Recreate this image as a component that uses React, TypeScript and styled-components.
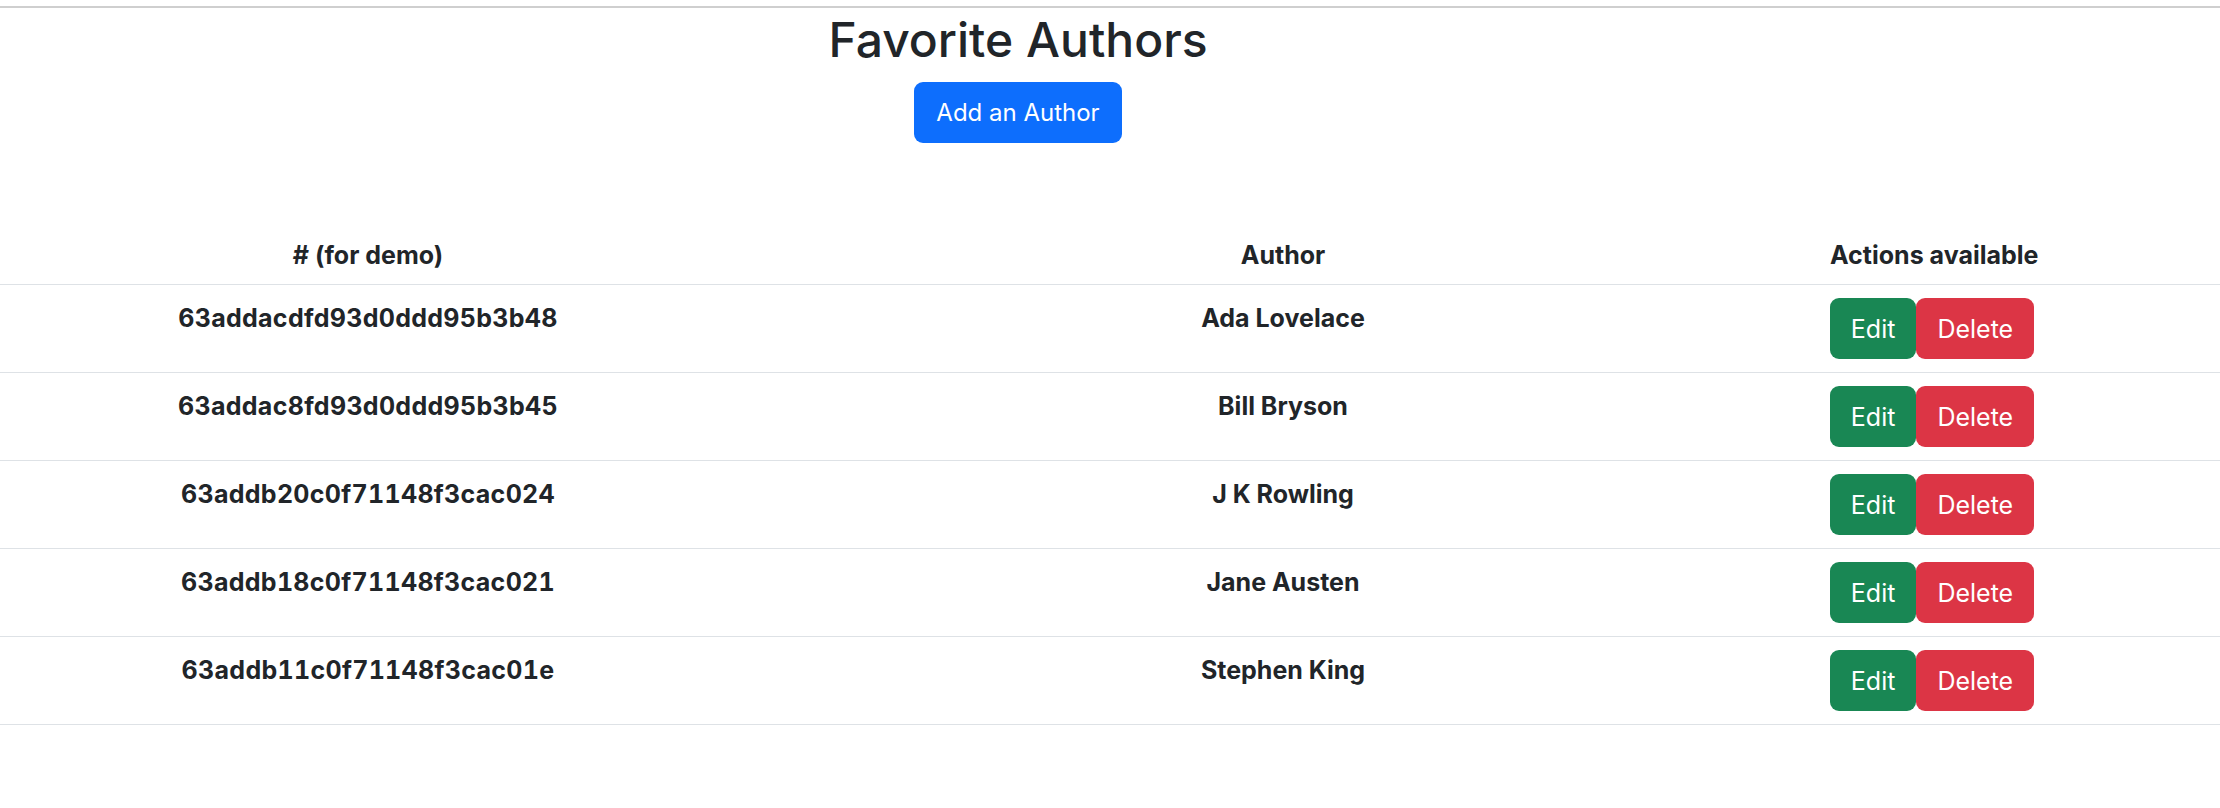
import React from "react";
import styled, { createGlobalStyle } from "styled-components";

const GlobalStyle = createGlobalStyle`
  html, body {
    margin: 0;
    padding: 0;
    background: #fff;
  }
  body {
    font-family: Inter, "Noto Sans", "Liberation Sans", sans-serif;
    color: #212529;
  }
  * {
    box-sizing: border-box;
  }
`;

const Page = styled.div`
  width: 2220px;
  min-height: 808px;
`;

const Rule = styled.hr`
  margin: 6px 0 0;
  height: 2px;
  border: 0;
  background-color: #cfcfcf;
`;

const Header = styled.header`
  width: 2036px;
  display: flex;
  flex-direction: column;
  align-items: center;
`;

const Title = styled.h1`
  margin: 3px 0 0;
  font-size: 48px;
  line-height: 58px;
  font-weight: 500;
  color: #212529;
`;

const Button = styled.button<{ $variant: "primary" | "success" | "danger" }>`
  display: inline-flex;
  align-items: center;
  justify-content: center;
  height: 61px;
  padding: 0 21px;
  border: 0;
  border-radius: 9px;
  font-family: inherit;
  font-size: 25px;
  font-weight: 400;
  line-height: 36px;
  color: #fff;
  white-space: nowrap;
  cursor: pointer;
  background-color: ${(p) =>
    p.$variant === "primary"
      ? "#0d6efd"
      : p.$variant === "success"
      ? "#198754"
      : "#dc3545"};
`;

const AddButton = styled(Button)`
  margin-top: 13px;
  padding: 0 22px;
  font-size: 24px;
`;

const Table = styled.table`
  margin-top: 82px;
  width: 2220px;
  border-collapse: collapse;
  table-layout: fixed;
`;

const Th = styled.th`
  padding: 12px 0 11px;
  font-size: 25px;
  line-height: 36px;
  font-weight: 700;
  text-align: center;
  white-space: nowrap;
  border-bottom: 1px solid #dee2e6;
`;

const Td = styled.td<{ $actions?: boolean; $mono?: boolean }>`
  padding: ${(p) => (p.$actions ? "13px 0" : "15px 0 13px")};
  font-size: 25px;
  line-height: 36px;
  font-weight: 700;
  text-align: center;
  vertical-align: top;
  white-space: nowrap;
  font-variant-numeric: ${(p) => (p.$mono ? "tabular-nums" : "normal")};
  letter-spacing: ${(p) => (p.$mono ? "0.3px" : "normal")};
  border-bottom: 1px solid #dee2e6;
`;

const Actions = styled.div`
  display: flex;
  justify-content: center;
`;

const authors = [
  { id: "63addacdfd93d0ddd95b3b48", name: "Ada Lovelace" },
  { id: "63addac8fd93d0ddd95b3b45", name: "Bill Bryson" },
  { id: "63addb20c0f71148f3cac024", name: "J K Rowling" },
  { id: "63addb18c0f71148f3cac021", name: "Jane Austen" },
  { id: "63addb11c0f71148f3cac01e", name: "Stephen King" },
];

export default function App() {
  return (
    <Page>
      <GlobalStyle />
      <Rule />
      <Header>
        <Title>Favorite Authors</Title>
        <AddButton $variant="primary">Add an Author</AddButton>
      </Header>
      <Table>
        <colgroup>
          <col style={{ width: 736 }} />
          <col style={{ width: 1094 }} />
          <col style={{ width: 204 }} />
          <col />
        </colgroup>
        <thead>
          <tr>
            <Th># (for demo)</Th>
            <Th>Author</Th>
            <Th>Actions available</Th>
            <Th />
          </tr>
        </thead>
        <tbody>
          {authors.map((a) => (
            <tr key={a.id}>
              <Td $mono>{a.id}</Td>
              <Td>{a.name}</Td>
              <Td $actions>
                <Actions>
                  <Button $variant="success">Edit</Button>
                  <Button $variant="danger">Delete</Button>
                </Actions>
              </Td>
              <Td $actions />
            </tr>
          ))}
        </tbody>
      </Table>
    </Page>
  );
}
